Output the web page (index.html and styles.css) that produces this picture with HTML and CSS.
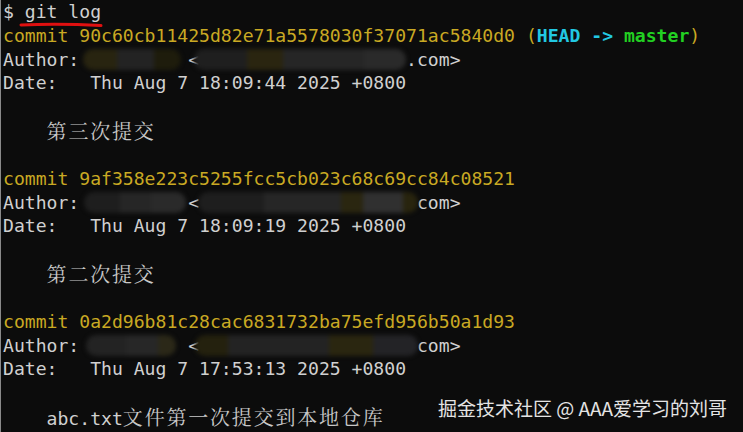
FILE: index.html
```html
<!DOCTYPE html>
<html>
<head>
<meta charset="utf-8">
<link rel="stylesheet" href="styles.css">
</head>
<body>
<div class="term">
  <div class="line">$ git log</div>
  <div class="line"><span class="y">commit 90c60cb11425d82e71a5578030f37071ac5840d0 (</span><span class="c">HEAD -&gt; </span><span class="g">master</span><span class="y">)</span></div>
  <div class="line author">Author:          &lt;                   .com&gt;<span class="blob b1 n"></span><span class="blob b1 e"></span></div>
  <div class="line">Date:   Thu Aug 7 18:09:44 2025 +0800</div>
  <div class="line"> </div>
  <div class="line">    <span class="cjk">第三次提交</span></div>
  <div class="line"> </div>
  <div class="line"><span class="y">commit 9af358e223c5255fcc5cb023c68c69cc84c08521</span></div>
  <div class="line author">Author:          &lt;                    com&gt;<span class="blob b2 n"></span><span class="blob b2 e"></span></div>
  <div class="line">Date:   Thu Aug 7 18:09:19 2025 +0800</div>
  <div class="line"> </div>
  <div class="line">    <span class="cjk">第二次提交</span></div>
  <div class="line"> </div>
  <div class="line"><span class="y">commit 0a2d96b81c28cac6831732ba75efd956b50a1d93</span></div>
  <div class="line author">Author:          &lt;                    com&gt;<span class="blob b3 n"></span><span class="blob b3 e"></span></div>
  <div class="line">Date:   Thu Aug 7 17:53:13 2025 +0800</div>
  <div class="line"> </div>
  <div class="line">    abc.txt<span class="cjk">文件第一次提交到本地仓库</span></div>
  <svg class="underline" width="84" height="8" viewBox="0 0 84 8"><path d="M2 4 Q40 2.2 82 4.6" stroke="#e01010" stroke-width="3" fill="none" stroke-linecap="round"/></svg>
  <div class="watermark">掘金技术社区 @ AAA爱学习的刘哥</div>
</div>
</body>
</html>
```
FILE: styles.css
```css
html, body {
  margin: 0;
  padding: 0;
  background: #0c0c0c;
}
.term {
  position: relative;
  width: 743px;
  height: 432px;
  box-sizing: border-box;
  border-left: 1px solid #8a8a8a;
  padding-left: 2px;
  overflow: hidden;
  font-family: "DejaVu Sans Mono", monospace;
  font-size: 18.1px;
  line-height: 23.83px;
  color: #d0d0d0;
}
.line {
  position: relative;
  height: 23.83px;
  white-space: pre;
}
.y { color: #c9a923; }
.c { color: #22c8e2; font-weight: bold; }
.g { color: #22d022; font-weight: bold; }
.cjk {
  font-family: "Noto Serif CJK SC", "Noto Sans CJK SC", sans-serif;
  font-size: 20px;
  letter-spacing: 1.8px;
  color: #c8c8c8;
}
.blob {
  position: absolute;
  top: 1px;
  height: 21px;
  border-radius: 10px;
  filter: blur(2px);
}
.b1.n { left: 80px; width: 98px; background: linear-gradient(90deg, #282410 0 35%, #232323 35% 72%, #1e1c0c 72%); }
.b1.e { left: 191px; width: 212px; background: linear-gradient(90deg, #1f1f1f 0 25%, #2a2510 25% 42%, #262626 42% 80%, #2a2a2a 80%); }
.b2.n { left: 81px; width: 102px; background: linear-gradient(90deg, #1e1e1e 0 35%, #262626 35% 66%, #2a2a2a 66%); }
.b2.e { left: 195px; width: 220px; background: linear-gradient(90deg, #1e1e1e 0 30%, #262626 30% 65%, #2a2610 65% 75%, #303030 75% 93%, #28240e 93%); }
.b3.n { left: 83px; width: 90px; background: linear-gradient(90deg, #232323 0 45%, #272727 45% 80%, #2b2818 80%); }
.b3.e { left: 192px; width: 223px; background: linear-gradient(90deg, #24210e 0 15%, #232323 15% 60%, #2a2610 60% 80%, #232326 80%); }
.underline {
  position: absolute;
  left: 18px;
  top: 21px;
}
.watermark {
  position: absolute;
  right: 16px;
  bottom: 12px;
  font-family: "Noto Sans CJK SC", sans-serif;
  font-size: 19px;
  line-height: 24px;
  color: #e4e4e4;
}
```
